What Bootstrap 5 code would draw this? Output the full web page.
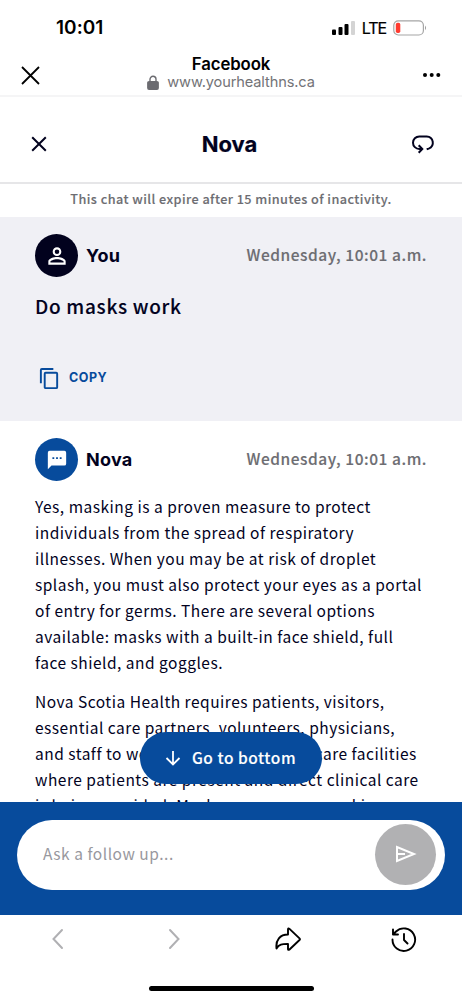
<!DOCTYPE html>
<html lang="en">
<head>
<meta charset="utf-8">
<meta name="viewport" content="width=device-width, initial-scale=1">
<title>Nova</title>
<link href="https://cdn.jsdelivr.net/npm/bootstrap@5.3.0/dist/css/bootstrap.min.css" rel="stylesheet">
<style>
  :root { --navy: #02021e; --blue: #074b9c; --grey: #6d6d72; }
  body { font-family: "Noto Sans CJK SC", "Noto Sans", sans-serif; color: var(--navy); background: #fff; }
  .phone { height: 1000px; width: 462px; }
  svg { display: block; flex: none; }
  .ios { font-family: Inter, "Liberation Sans", sans-serif; color: #000; }
  .heading { font-family: Inter, "Open Sans", sans-serif; font-weight: 700; }
  .semi { font-weight: 500; -webkit-text-stroke: .12px currentColor; }
  .status-bar { height: 55px; padding: 0 34px 0 56px; }
  .clock { font-size: 19px; font-weight: 600; letter-spacing: .05px; line-height: 24px; }
  .lte { font-size: 16px; letter-spacing: -1.1px; line-height: 20px; margin: 0 7px 0 7px; -webkit-text-stroke: .2px #000; }
  .browser-bar { height: 42px; padding: 0 21px; border-bottom: 2px solid #f5f5f6; }
  .site { margin-top: -4px; }
  .site-name { font-size: 16.8px; font-weight: 600; line-height: 18px; letter-spacing: -.1px; }
  .site-url { font-size: 14.6px; line-height: 18px; color: #737377; letter-spacing: -.12px; }
  .chat-head { height: 87px; padding: 9px 27px 0 30px; border-bottom: 2px solid #e6e6e8; }
  .chat-title { font-size: 22px; line-height: 30px; letter-spacing: -.05px; -webkit-text-stroke: .2px currentColor; }
  .expiry { height: 33px; font-size: 12.7px; line-height: 30px; letter-spacing: .43px; color: var(--grey); }
  .msg { padding: 17px 35px 0; }
  .msg-you { height: 204px; background: #f0f0f5; }
  .avatar { width: 43px; height: 43px; background: var(--navy); }
  .avatar-nova { background: var(--blue); }
  .who { font-size: 18px; line-height: 24px; margin-left: 8px; letter-spacing: .25px; }
  .stamp { font-size: 15.5px; line-height: 26px; letter-spacing: .55px; color: var(--grey); margin-top: -3px; }
  .question { font-size: 19px; line-height: 28px; letter-spacing: .7px; margin-top: 15px; }
  .copy { font-family: Inter, sans-serif; font-size: 12.5px; font-weight: 700; letter-spacing: .5px; color: var(--blue); margin-top: 47px; padding-left: 3px; }
  .answer { font-size: 15.5px; line-height: 26px; letter-spacing: .5px; margin-top: 12px; }
  .answer p { margin-bottom: 13px; white-space: nowrap; }
  .go-bottom { bottom: 18px; left: 140px; width: 182px; height: 52px; background: var(--blue); color: #fff; font-size: 15.5px; letter-spacing: .55px; gap: 10px; padding-right: 2px; }
  .composer { height: 113px; background: var(--blue); padding: 18px 17px 0; }
  .entry { height: 70px; background: #fff; padding: 0 9px 0 26px; color: #98989e; font-size: 15.5px; letter-spacing: .52px; }
  .entry > span { margin-top: -3px; }
  .send { width: 61px; height: 61px; background: #b1b1b3; margin-top: -2px; }
  .tool-bar { height: 85px; }
  .home-bar { width: 165px; height: 5px; background: #000; bottom: 9px; left: 149px; }
</style>
</head>
<body>
<div class="phone d-flex flex-column overflow-hidden position-relative">
  <div class="status-bar ios d-flex align-items-center flex-shrink-0">
    <span class="clock me-auto">10:01</span>
    <svg width="24" height="16" viewBox="0 0 24 16"><rect x="1" y="9.500" width="4" height="5.500" rx="1"/><rect x="7.500" y="7" width="4" height="8" rx="1"/><rect x="13.500" y="4" width="4" height="11" rx="1"/><rect x="20" y="1" width="4" height="14" rx="1" fill="#d4d4d4"/></svg>
    <span class="lte">LTE</span>
    <svg width="35" height="16" viewBox="0 0 35 16"><rect x=".8" y=".8" width="29.600" height="14.200" rx="4.500" fill="none" stroke="#a5a5a5" stroke-width="1.200"/><rect x="2.800" y="2.800" width="4.500" height="10.300" rx="1.800" fill="#ff3b30"/><path d="M32 5.500q2 2.400 0 4.800z" fill="#999"/></svg>
  </div>
  <div class="browser-bar ios d-flex align-items-center justify-content-between flex-shrink-0">
    <svg width="19" height="19" viewBox="0 0 19 19"><path d="M1 1l17 17M18 1L1 18" stroke="#000" stroke-width="1.800"/></svg>
    <div class="site text-center">
      <div class="site-name">Facebook</div>
      <div class="site-url d-flex align-items-center"><svg width="12" height="15" viewBox="0 0 11 14"><path d="M2.700 7V4a2.800 2.800 0 0 1 5.600 0v3" fill="none" stroke="#6b6b70" stroke-width="1.300"/><rect y="5.500" width="11" height="8.500" rx="1.800" fill="#6b6b70"/></svg><span class="ps-1 ms-1">www.yourhealthns.ca</span></div>
    </div>
    <svg width="19" height="6" viewBox="0 0 19 6"><circle cx="3" cy="3" r="2"/><circle cx="9.700" cy="3" r="2"/><circle cx="16.300" cy="3" r="2"/></svg>
  </div>
  <div class="chat-head d-flex align-items-center justify-content-between flex-shrink-0">
    <svg width="18" height="18" viewBox="0 0 18 18"><path d="M2.200 2.200l13.600 13.600M15.800 2.200L2.200 15.800" stroke="#02021e" stroke-width="2"/></svg>
    <h1 class="chat-title heading m-0">Nova</h1>
    <svg width="24" height="22" viewBox="0 0 24 22" fill="none" stroke="#02021e" stroke-width="2"><path d="M10.500 16H8.300A6.300 6.300 0 0 1 8.300 3.400h7.400a6.300 6.300 0 0 1 2 12.200l-2 .6M7.700 12.300l3.600 3.700-3.600 3.700"/></svg>
  </div>
  <div class="expiry semi text-center flex-shrink-0">This chat will expire after 15 minutes of inactivity.</div>
  <main class="flex-grow-1 overflow-hidden position-relative">
    <section class="msg msg-you">
      <div class="d-flex align-items-center">
        <div class="avatar rounded-circle d-flex align-items-center justify-content-center"><svg width="26" height="26" viewBox="0 0 24 24" fill="#fff"><path d="M12 5.900a2.100 2.100 0 1 1 0 4.200 2.100 2.100 0 0 1 0-4.200m0 9c2.970 0 6.100 1.460 6.100 2.100v1.100H5.900V17c0-.64 3.130-2.100 6.100-2.100M12 4a4 4 0 1 0 0 8 4 4 0 0 0 0-8m0 9c-2.670 0-8 1.340-8 4v3h16v-3c0-2.660-5.330-4-8-4"/></svg></div>
        <span class="who heading me-auto">You</span>
        <span class="stamp semi">Wednesday, 10:01 a.m.</span>
      </div>
      <div class="question semi">Do masks work</div>
      <div class="copy d-flex align-items-center"><svg width="23" height="23" viewBox="0 0 24 24" fill="#074b9c"><path d="M16 1H4a2 2 0 0 0-2 2v14h2V3h12zm3 4H8a2 2 0 0 0-2 2v14c0 1.100.9 2 2 2h11a2 2 0 0 0 2-2V7a2 2 0 0 0-2-2m0 16H8V7h11z"/></svg><span class="ms-2">COPY</span></div>
    </section>
    <section class="msg">
      <div class="d-flex align-items-center">
        <div class="avatar avatar-nova rounded-circle d-flex align-items-center justify-content-center"><svg width="22" height="22" viewBox="0 0 24 24" fill="#fff"><path d="M20 2H4a2 2 0 0 0-2 2v18l4-4h14a2 2 0 0 0 2-2V4a2 2 0 0 0-2-2M9 11H7V9h2zm4 0h-2V9h2zm4 0h-2V9h2z"/></svg></div>
        <span class="who heading me-auto">Nova</span>
        <span class="stamp semi">Wednesday, 10:01 a.m.</span>
      </div>
      <div class="answer">
        <p>Yes, masking is a proven measure to protect<br>individuals from the spread of respiratory<br>illnesses. When you may be at risk of droplet<br>splash, you must also protect your eyes as a portal<br>of entry for germs. There are several options<br>available: masks with a built-in face shield, full<br>face shield, and goggles.</p>
        <p>Nova Scotia Health requires patients, visitors,<br>essential care partners, volunteers, physicians,<br>and staff to wear masks in all health care facilities<br>where patients are present and direct clinical care<br>is being provided. Masks are worn as masking</p>
      </div>
    </section>
    <div class="go-bottom semi rounded-pill position-absolute d-flex align-items-center justify-content-center"><svg width="18" height="18" viewBox="0 0 18 18" fill="none" stroke="#fff" stroke-width="1.800"><path d="M9 2v13.500M2.500 9L9 15.500 15.500 9"/></svg><span>Go to bottom</span></div>
  </main>
  <div class="composer flex-shrink-0">
    <div class="entry rounded-pill d-flex align-items-center justify-content-between"><span>Ask a follow up...</span>
      <div class="send rounded-circle d-flex align-items-center justify-content-center"><svg width="22" height="18" viewBox="0 0 22 18" fill="none" stroke="#fff" stroke-width="2"><path d="M2 2v14l17-7zM2 9h8"/></svg></div>
    </div>
  </div>
  <div class="tool-bar ios d-flex flex-shrink-0 pt-2">
    <div class="col-3 d-flex justify-content-center pt-1"><svg width="24" height="24" viewBox="0 0 24 24" fill="none" stroke="#b0b0b3" stroke-width="2" stroke-linecap="round"><path d="M16 3l-8.500 9L16 21"/></svg></div>
    <div class="col-3 d-flex justify-content-center pt-1"><svg width="24" height="24" viewBox="0 0 24 24" fill="none" stroke="#b0b0b3" stroke-width="2" stroke-linecap="round"><path d="M9 3l8.500 9L9 21"/></svg></div>
    <div class="col-3 d-flex justify-content-center pt-1"><svg width="28" height="26" viewBox="0 0 28 26" fill="none" stroke="#000" stroke-width="1.900" stroke-linejoin="round"><path d="M13 7.500V2.500q0-1.800 1.500-.6l10 9.500q.8.800 0 1.600l-10 9.500q-1.500 1-1.500-.6v-5C7 17 4 17 1.500 21.500.5 13 5 7.500 13 7.500z"/></svg></div>
    <div class="col-3 d-flex justify-content-center pt-1"><svg width="28" height="26" viewBox="0 0 28 26" fill="none" stroke="#000" stroke-width="1.900" stroke-linecap="round" stroke-linejoin="round"><path d="M2.500 12.500a11.300 11.300 0 1 0 3.500-8L3 7.500M3 2.500v5h5M14 7v6l3.500 3.500"/></svg></div>
  </div>
  <div class="home-bar rounded-pill position-absolute"></div>
</div>
<script src="https://cdn.jsdelivr.net/npm/bootstrap@5.3.0/dist/js/bootstrap.bundle.min.js"></script>
</body>
</html>
